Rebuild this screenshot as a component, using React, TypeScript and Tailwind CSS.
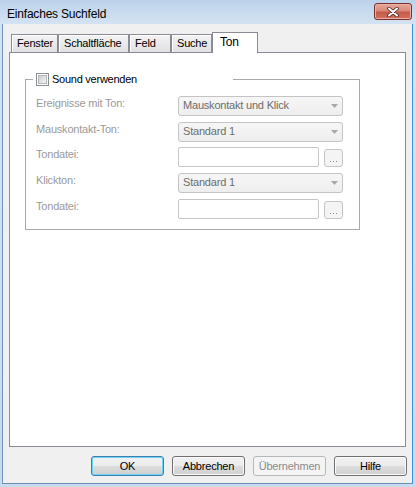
import React from 'react';

const tabs = [
  { label: 'Fenster', w: 'w-[47px]' },
  { label: 'Schaltfläche', w: 'w-[71px]' },
  { label: 'Feld', w: 'w-[42px]' },
  { label: 'Suche', w: 'w-[41px]' },
];

const labelCls = 'w-[142px] shrink-0 pt-[1px] leading-[13px] text-[#9a9a9a]';

function Combo({ value }: { value: string }) {
  return (
    <div className="flex h-[20px] w-[165px] items-center justify-between rounded-[3px] border border-[#c4c4c4] bg-[linear-gradient(#f6f6f6,#eeeeee)] pl-[4px] pr-[4px]">
      <span className="pb-[1px] leading-[13px] text-[#6d6d6d]">{value}</span>
      <svg width="7" height="4" viewBox="0 0 7 4">
        <path d="M0 0h7L3.5 4z" fill="#a8a8a8" />
      </svg>
    </div>
  );
}

function FileField() {
  return (
    <div className="flex items-end gap-[5px]">
      <div className="h-[20px] w-[141px] rounded-[2px] border border-[#c6c6c6] bg-white" />
      <div className="flex h-[18px] w-[19px] items-end justify-center gap-[2px] rounded-[3px] border border-[#c6c6c6] bg-[#f4f4f4] pb-[4px]">
        <span className="h-[1px] w-[1px] bg-[#8a8a8a]" />
        <span className="h-[1px] w-[1px] bg-[#8a8a8a]" />
        <span className="h-[1px] w-[1px] bg-[#8a8a8a]" />
      </div>
    </div>
  );
}

function DlgButton({ label, variant }: { label: string; variant?: 'default' | 'disabled' }) {
  if (variant === 'disabled') {
    return (
      <div className="flex h-[20px] w-[73px] items-center justify-center rounded-[3px] border border-[#b5b8bb] bg-[#f4f4f4] leading-[13px] text-[#8b8b8b]">
        {label}
      </div>
    );
  }
  return (
    <div
      className={
        variant === 'default'
          ? 'flex h-[20px] w-[73px] items-center justify-center rounded-[3px] border border-[#3c7fb1] bg-[linear-gradient(#f2f2f2_0%,#ebebeb_50%,#dddddd_50%,#cfcfcf_100%)] leading-[13px] text-black shadow-[inset_0_0_0_1px_#6fd3f7]'
          : 'flex h-[20px] w-[73px] items-center justify-center rounded-[3px] border border-[#707070] bg-[linear-gradient(#f2f2f2_0%,#ebebeb_50%,#dddddd_50%,#cfcfcf_100%)] leading-[13px] text-black shadow-[inset_0_0_0_1px_#fbfbfb]'
      }
    >
      {label}
    </div>
  );
}

export default function App() {
  return (
    <div className="flex h-[487px] w-[416px] flex-col bg-[linear-gradient(180deg,#bcd2ea_0px,#d4e3f3_24px,#c8dbef_100%)] pb-[3px] pl-[2px] pr-[3px] font-['Liberation_Sans',Arial,sans-serif] text-[11px] tracking-[-0.2px] text-black">
      {/* title bar */}
      <div className="flex h-[24px] shrink-0 items-start justify-between">
        <span className="ml-[5px] mt-[7px] text-[12px] leading-[14px]">Einfaches Suchfeld</span>
        <div className="mr-[1px] mt-[3px] flex h-[17px] w-[38px] items-center justify-center rounded-[3px] border border-[#7a2f2a] bg-[linear-gradient(#e9a99b_0%,#d88a7b_45%,#c55a4a_55%,#d5705d_100%)] shadow-[inset_0_0_0_1px_#eab0a4]">
          <svg width="12" height="10" viewBox="0 0 12 10">
            <path d="M2 1.5l8 7M10 1.5l-8 7" stroke="#4a2420" strokeWidth="3.6" strokeLinecap="round" />
            <path d="M2 1.5l8 7M10 1.5l-8 7" stroke="#ffffff" strokeWidth="2" strokeLinecap="round" />
          </svg>
        </div>
      </div>

      {/* client area */}
      <div className="flex flex-1 flex-col border border-t-0 border-b-[#6c8db4] border-l-[#7294bb] border-r-[#3f93d8] bg-[#f0f0f0]">
        {/* tab strip */}
        <div className="ml-[6px] mt-[8px] flex items-end pl-[2px]">
          {tabs.map(t => (
            <div
              key={t.label}
              className={`${t.w} flex h-[18px] items-center border border-b-0 border-[#898c95] bg-[linear-gradient(#f3f3f3,#e1e1e1)] pl-[5px] leading-[13px] shadow-[inset_1px_1px_0_#ffffff]`}
            >
              {t.label}
            </div>
          ))}
          <div className="relative z-10 -mb-px flex h-[21px] w-[46px] items-center border border-b-0 border-[#898c95] bg-white pb-[2px] pl-[7px] text-[12px] leading-[14px]">
            Ton
          </div>
        </div>

        {/* tab panel */}
        <div className="ml-[6px] mr-[6px] flex-1 border border-[#898c95] bg-white">
          <fieldset className="ml-[15px] mt-[19px] w-[335px] border border-[#a9a9a9]">
            <legend className="ml-[7px] flex h-[14px] w-[200px] items-center pl-[3px]">
              <span className="flex h-[13px] w-[13px] shrink-0 items-center justify-center border border-[#8e8f8f] bg-white">
                <span className="h-[9px] w-[9px] border border-[#b3b6ba] bg-[linear-gradient(135deg,#cdcdcd,#f4f4f4)]" />
              </span>
              <span className="ml-[3px] leading-[13px] tracking-[-0.25px]">Sound verwenden</span>
            </legend>

            <div className="flex flex-col pb-[10px] pl-[10px] pt-[10px]">
              <div className="flex items-start">
                <span className={labelCls}>Ereignisse mit Ton:</span>
                <Combo value="Mauskontakt und Klick" />
              </div>
              <div className="mt-[6px] flex items-start">
                <span className={labelCls}>Mauskontakt-Ton:</span>
                <Combo value="Standard 1" />
              </div>
              <div className="mt-[5px] flex items-start">
                <span className={labelCls}>Tondatei:</span>
                <FileField />
              </div>
              <div className="mt-[6px] flex items-start">
                <span className={labelCls}>Klickton:</span>
                <Combo value="Standard 1" />
              </div>
              <div className="mt-[6px] flex items-start">
                <span className={labelCls}>Tondatei:</span>
                <FileField />
              </div>
            </div>
          </fieldset>
        </div>

        {/* buttons */}
        <div className="mt-[9px] flex justify-end gap-[8px] pb-[7px] pr-[5px]">
          <DlgButton label="OK" variant="default" />
          <DlgButton label="Abbrechen" />
          <DlgButton label="Übernehmen" variant="disabled" />
          <DlgButton label="Hilfe" />
        </div>
      </div>
    </div>
  );
}
